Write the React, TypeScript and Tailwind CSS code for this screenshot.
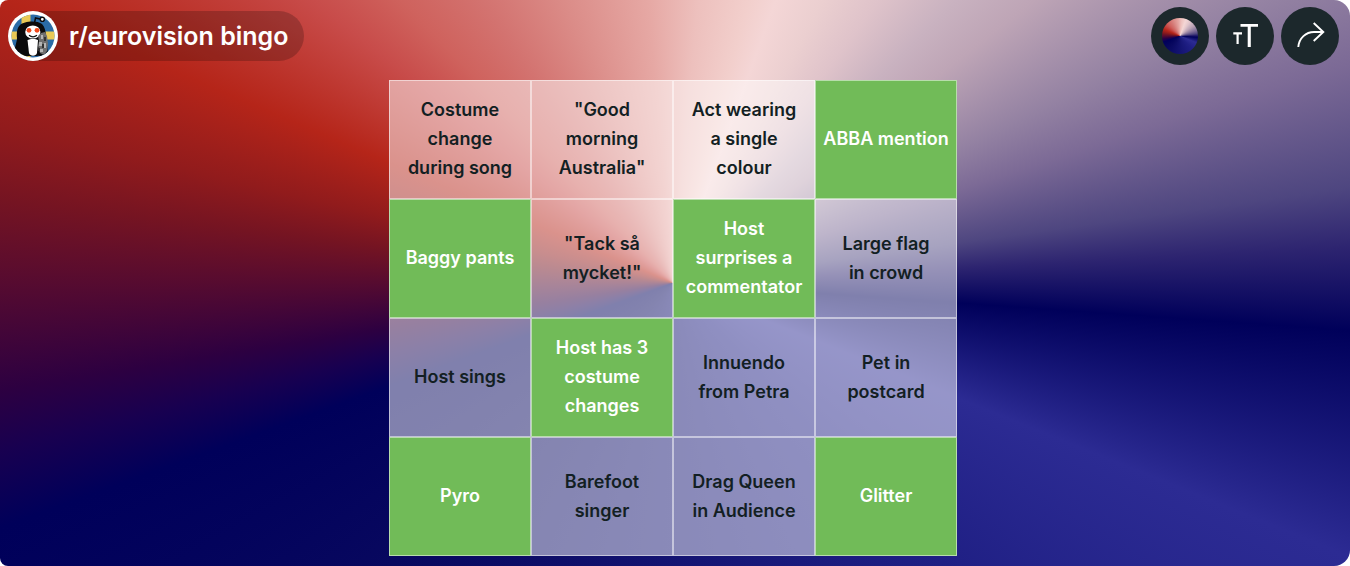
import clsx from "clsx";

type Square = { label: string; marked?: boolean };

const squares: Square[] = [
  { label: "Costume\nchange\nduring song" },
  { label: '"Good\nmorning\nAustralia"' },
  { label: "Act wearing\na single\ncolour" },
  { label: "ABBA mention", marked: true },
  { label: "Baggy pants", marked: true },
  { label: '"Tack så\nmycket!"' },
  { label: "Host\nsurprises a\ncommentator", marked: true },
  { label: "Large flag\nin crowd" },
  { label: "Host sings" },
  { label: "Host has 3\ncostume\nchanges", marked: true },
  { label: "Innuendo\nfrom Petra" },
  { label: "Pet in\npostcard" },
  { label: "Pyro", marked: true },
  { label: "Barefoot\nsinger" },
  { label: "Drag Queen\nin Audience" },
  { label: "Glitter", marked: true },
];

const wheel =
  "bg-[conic-gradient(from_20deg_at_49.85%_50%,#f4d6d6_0deg,#ebcfd0_8deg,#dfc3ca_16deg,#c9b2c0_25deg,#bea5b6_32deg,#9381a2_45deg,#7c6a96_52deg,#4e4680_62deg,#2d2470_67deg,#00005a_74deg,#2c2b93_92deg,#1f1f84_116deg,#08085f_205deg,#00005a_230deg,#180050_236deg,#2d0041_241deg,#560b30_250deg,#751422_257deg,#911b1c_263deg,#b52519_273deg,#c84c4a_288deg,#cf625d_296deg,#d37370_306deg,#db8c88_319deg,#e6a8a4_335deg,#edc0bd_345deg,#f2cfcc_355deg,#f4d6d6_360deg)]";

function Avatar() {
  return (
    <svg viewBox="0 0 50 50" className="size-[50px] shrink-0" aria-hidden="true">
      <defs>
        <clipPath id="avatar-disc">
          <circle cx="25" cy="25" r="21.5" />
        </clipPath>
      </defs>
      <circle cx="25" cy="25" r="25" fill="#fff" />
      <g clipPath="url(#avatar-disc)">
        <rect width="50" height="50" fill="#2a6ba6" />
        <path d="M13.500 0h9v50h-9zM0 20.500h50v8H0z" fill="#e9c956" />
        <path
          d="M12 14C16 10 29 9 34 13C37 16 37.500 20 38 24L40 43C36 47 31 44 29 45H20C15 47 10 45 7 42C6 36 9 32 9 27C8.500 22 9 17 12 14Z"
          fill="#0b0b0c"
        />
        <path d="M19.500 29C22 27.500 28 27.500 30 29L29 42C28 45.500 22 45.500 21 42Z" fill="#fff" />
        <ellipse cx="24.800" cy="21" rx="7.600" ry="6.600" fill="#fff" />
        <circle cx="21" cy="19.300" r="2.400" fill="#f0491c" />
        <circle cx="29" cy="19.300" r="2.400" fill="#f0491c" />
        <path d="M21 24.300Q25 27.500 29 24.300" fill="none" stroke="#111" strokeWidth="1.200" />
        <path d="M30 25l3-3 4-1 2 4 1 8-1 7-3 4-4-2-2-7 1-5z" fill="#6f6f6f" />
        <path d="M33 24h2v4h-2zM31 31h3v4h-3zM36 32h2v5h-2zM32 38h3v3h-3z" fill="#b4b4b4" />
        <path d="M36 26h2v4h-2zM34 33h2v4h-2zM30 37h2v3h-2z" fill="#333" />
      </g>
      <path d="M26.500 12L27.500 7L33 8.300" fill="none" stroke="#0b0b0c" strokeWidth="1.500" />
      <circle cx="34.300" cy="8.300" r="2.100" fill="#fff" stroke="#0b0b0c" strokeWidth="1.400" />
    </svg>
  );
}

const roundButton = "flex size-[58px] items-center justify-center rounded-full bg-[#1c282c] text-white";

export default function App() {
  return (
    <div
      className={clsx(
        "flex min-h-screen flex-col rounded-l-lg rounded-r-2xl pr-1 pb-[10px] font-['Inter','Liberation_Sans',sans-serif]",
        wheel,
      )}
    >
      <header className="flex items-center justify-between pt-[7px] pr-[7px] pl-2">
        <div className="flex items-center gap-[11px] rounded-full bg-black/20 pr-4">
          <Avatar />
          <h1 className="text-[25px] leading-8 font-semibold text-white">r/eurovision bingo</h1>
        </div>
        <div className="flex gap-[7px]">
          <button type="button" aria-label="Background" className={roundButton}>
            <span className={clsx("size-9 rounded-full", wheel)} />
          </button>
          <button type="button" aria-label="Text size" className={roundButton}>
            <svg viewBox="0 0 58 58" className="size-full" fill="currentColor" aria-hidden="true">
              <path d="M24.500 17H42V19.700H34.800V40H31.700V19.700H24.500Z" />
              <path d="M17.300 25.200H26V27.400H22.700V37H20.500V27.400H17.300Z" />
            </svg>
          </button>
          <button type="button" aria-label="Share" className={roundButton}>
            <svg
              viewBox="0 0 58 58"
              className="size-full"
              fill="none"
              stroke="currentColor"
              strokeWidth="1.900"
              aria-hidden="true"
            >
              <path d="M17.300 40C18 31 25 25 33 25H42" />
              <path d="M32.700 16L42.300 25L32.700 34" />
            </svg>
          </button>
        </div>
      </header>

      <main className="mt-[15px] flex flex-1 justify-center">
        <div className="grid w-full max-w-[568px] grid-cols-4 auto-rows-fr">
          {squares.map(({ label, marked }) => (
            <button
              key={label}
              type="button"
              aria-pressed={!!marked}
              className={clsx(
                "min-h-[119px] border border-white/50 px-1 pb-0.5 text-lg leading-[29px] font-semibold whitespace-pre-line",
                marked ? "bg-[#71bb58] text-white" : "bg-white/50 text-[#131f23]",
              )}
            >
              {label}
            </button>
          ))}
        </div>
      </main>
    </div>
  );
}
